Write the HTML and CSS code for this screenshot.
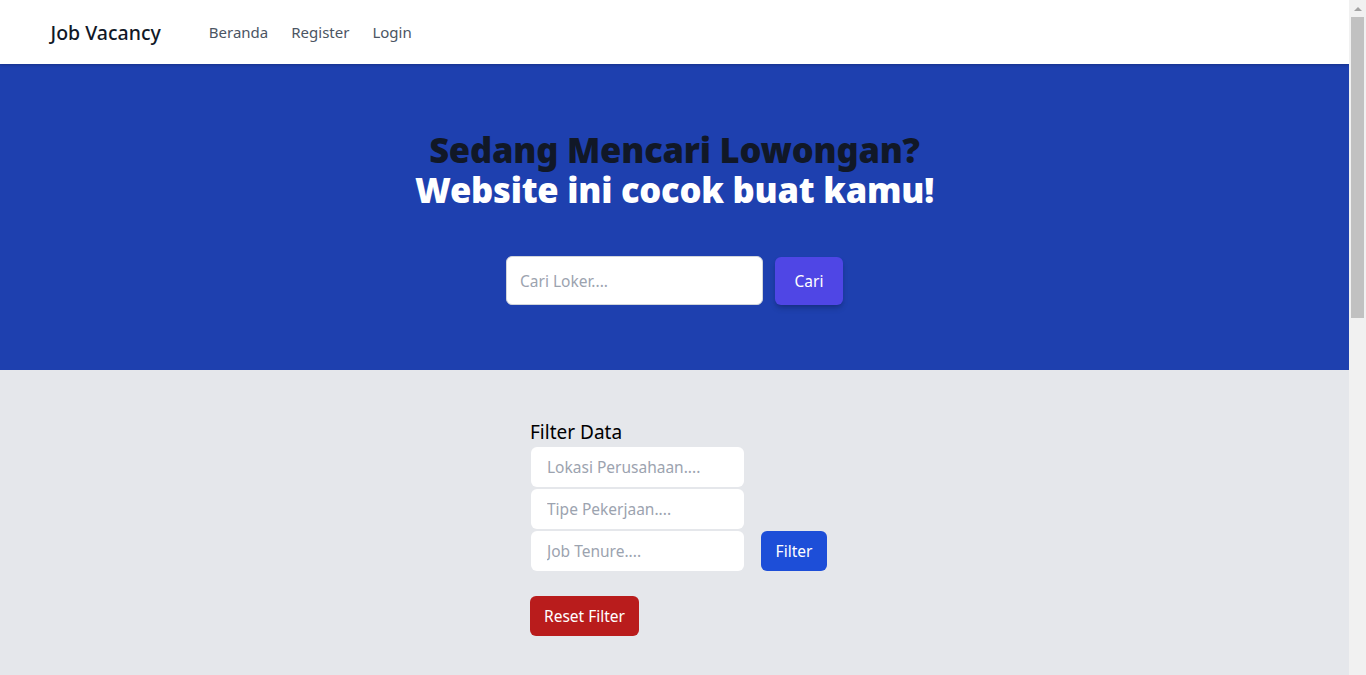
FILE: index.html
```html
<!DOCTYPE html>
<html lang="id">
<head>
<meta charset="utf-8">
<title>Job Vacancy</title>
<link rel="stylesheet" href="styles.css">
</head>
<body>
<div class="page">
  <nav class="navbar">
    <div class="container nav-inner">
      <a class="brand" href="#">Job Vacancy</a>
      <ul class="nav-links">
        <li><a href="#">Beranda</a></li>
        <li><a href="#">Register</a></li>
        <li><a href="#">Login</a></li>
      </ul>
    </div>
  </nav>
  <header class="hero">
    <h1 class="hero-title"><span class="dark">Sedang Mencari Lowongan?</span><br><span class="light">Website ini cocok buat kamu!</span></h1>
    <form class="search">
      <input class="search-input" type="text" placeholder="Cari Loker....">
      <button class="btn btn-indigo" type="button">Cari</button>
    </form>
  </header>
  <main class="filter-section">
    <div class="filter-box">
      <h2 class="filter-title">Filter Data</h2>
      <div class="filter-row">
        <div class="filter-inputs">
          <input class="field" type="text" placeholder="Lokasi Perusahaan....">
          <input class="field" type="text" placeholder="Tipe Pekerjaan....">
          <input class="field" type="text" placeholder="Job Tenure....">
        </div>
        <button class="btn btn-blue" type="button">Filter</button>
      </div>
      <button class="btn btn-red" type="button">Reset Filter</button>
    </div>
  </main>
</div>
<div class="scrollbar" aria-hidden="true">
  <div class="sb-arrow"></div>
  <div class="sb-thumb"></div>
</div>
</body>
</html>
```
FILE: styles.css
```css
* { box-sizing: border-box; }
html, body { margin: 0; padding: 0; }
body {
  font-family: "Noto Sans", "Open Sans", sans-serif;
  color: #111827;
  background: #e5e7eb;
}
.page {
  margin-right: 17px;
}
.scrollbar {
  position: fixed;
  top: 0;
  right: 0;
  width: 17px;
  height: 100vh;
  background: #f1f1f1;
  z-index: 10;
}
.sb-arrow {
  height: 17px;
  display: flex;
  align-items: center;
  justify-content: center;
}
.sb-arrow::before {
  content: "";
  width: 0;
  height: 0;
  border-left: 4px solid transparent;
  border-right: 4px solid transparent;
  border-bottom: 4px solid #a3a3a3;
}
.sb-thumb {
  margin: 0 2px;
  height: 301px;
  background: #c1c1c1;
}
.container {
  max-width: 1280px;
  margin: 0 auto;
  padding: 0 16px;
}
.navbar {
  background: #fff;
  height: 64px;
  position: relative;
  z-index: 2;
  box-shadow: 0 1px 3px rgba(0,0,0,0.15), 0 1px 2px rgba(0,0,0,0.08);
}
.nav-inner {
  display: flex;
  align-items: center;
  height: 64px;
}
.brand {
  font-size: 19.5px;
  color: #111827;
  text-decoration: none;
  font-weight: 500;
  margin-right: 48px;
}
.nav-links {
  list-style: none;
  margin: 0;
  padding: 0;
  display: flex;
  gap: 23px;
}
.nav-links a {
  color: #4b5563;
  text-decoration: none;
  font-size: 15px;
}
.hero {
  background: #1e40af;
  padding: 64px 16px 65px;
  text-align: center;
}
.hero-title {
  margin: 2px 0 0;
  font-size: 34.5px;
  line-height: 40px;
  font-weight: 900;
  letter-spacing: -0.2px;
}
.hero-title .dark { color: #111827; }
.hero-title .light { color: #fff; }
.search {
  margin-top: 46px;
  display: flex;
  justify-content: center;
  align-items: center;
  gap: 12px;
}
.search-input {
  width: 257px;
  height: 49px;
  border: 1px solid #d1d5db;
  border-radius: 6px;
  padding: 0 13px;
  font: inherit;
  font-size: 15.5px;
  background: #fff;
  outline: none;
}
.search-input::placeholder, .field::placeholder { color: #9ca3af; }
.btn {
  border: none;
  border-radius: 6px;
  color: #fff;
  font: inherit;
  font-size: 15.5px;
  cursor: pointer;
}
.btn-indigo {
  background: #4f46e5;
  width: 68px;
  height: 48px;
  box-shadow: 0 4px 6px -1px rgba(0,0,0,0.2), 0 2px 4px -2px rgba(0,0,0,0.15);
}
.filter-section {
  min-height: 1068px;
  padding-top: 48px;
}
.filter-box {
  width: 289px;
  margin: 0 auto;
}
.filter-title {
  margin: 0 0 1px;
  font-size: 19px;
  line-height: 28px;
  font-weight: 400;
  color: #000;
}
.filter-row {
  display: flex;
  align-items: flex-end;
  gap: 17px;
  white-space: nowrap;
}
.filter-inputs {
  display: flex;
  flex-direction: column;
  gap: 2px;
  padding-left: 1px;
}
.field {
  width: 213px;
  height: 40px;
  border: none;
  border-radius: 6px;
  background: #fff;
  padding: 0 16px;
  font: inherit;
  font-size: 15.5px;
  outline: none;
}
.btn-blue {
  background: #1d4ed8;
  width: 66px;
  height: 40px;
  flex: none;
}
.btn-red {
  background: #b91c1c;
  margin-top: 25px;
  width: 109px;
  height: 40px;
}
```
